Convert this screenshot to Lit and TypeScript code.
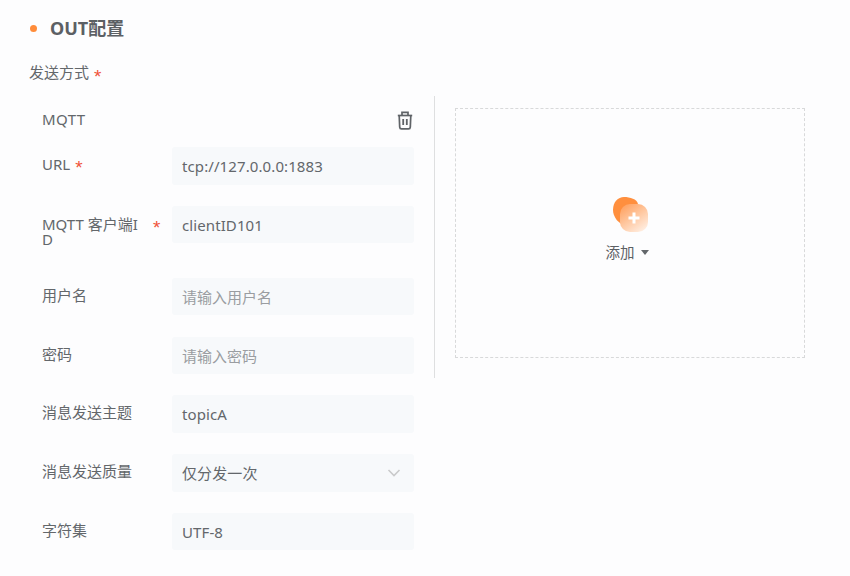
import { LitElement, html, css } from "lit";
import { customElement } from "lit/decorators.js";

type Row = { label: string; required?: boolean; value?: string; placeholder?: string; select?: boolean; tall?: boolean };

const ROWS: Row[] = [
  { label: "URL", required: true, value: "tcp://127.0.0.0:1883" },
  { label: "MQTT 客户端ID", required: true, value: "clientID101", tall: true },
  { label: "用户名", placeholder: "请输入用户名" },
  { label: "密码", placeholder: "请输入密码" },
  { label: "消息发送主题", value: "topicA" },
  { label: "消息发送质量", value: "仅分发一次", select: true },
  { label: "字符集", value: "UTF-8" },
];

@customElement("app-root")
export class AppRoot extends LitElement {
  static styles = css`
    :host {
      display: block;
      width: 850px;
      height: 576px;
      overflow: hidden;
      background: #fdfdfe;
      color: #63676b;
      font-family: "Noto Sans", "Noto Sans CJK SC", sans-serif;
      font-size: 15px;
    }
    .page { padding: 14px 0 0 30px; }
    .title { display: flex; align-items: center; height: 28px; gap: 13px; }
    .dot { width: 7px; height: 7px; border-radius: 50%; background: #ff8c3a; }
    .title-text { font-size: 18px; font-weight: 700; color: #5c6064; line-height: 27px; }
    .method { margin-top: 11px; height: 38px; line-height: 38px; margin-left: -1px; }
    .method, .label { white-space: nowrap; }
    .star { color: #f0533a; margin-left: 3px; font-family: "Liberation Mono", monospace; font-size: 19px; line-height: 1; font-weight: 400; position: relative; top: 5px; }
    .label .star { top: 6px; }
    .body { display: flex; margin-top: 5px; height: 282px; }
    .left { width: 405px; padding: 0 20px 0 12px; box-sizing: border-box; border-right: 1px solid #dedfe0; }
    .head { display: flex; justify-content: space-between; align-items: flex-start; height: 51px; padding-top: 12px; box-sizing: border-box; line-height: 22px; letter-spacing: 0.4px; }
    .head svg { display: block; margin-top: 3px; margin-right: 1px; }
    .row { display: flex; margin-bottom: 21.25px; }
    .label { width: 130px; flex: none; display: flex; padding-top: 7px; line-height: 20px; position: relative; }
    .label.tall { white-space: normal; line-height: 15px; padding-top: 11px; word-break: break-all; padding-right: 30px; box-sizing: border-box; }
    .label.tall .star { position: absolute; left: 109px; top: 14px; margin: 0; }
    .control {
      flex: 1;
      height: 37.5px;
      border-radius: 3px;
      background: #f7f9fb;
      display: flex;
      align-items: center;
      justify-content: space-between;
      padding: 0 13px 0 10px;
      box-sizing: border-box;
      font-size: 15px;
      letter-spacing: 0.1px;
      color: #63676b;
    }
    .tall-row { height: 50.75px; }
    .control.empty { color: #9a9da1; letter-spacing: 0; }
    .right { margin: 12px 0 0 20px; width: 350px; height: 250px; box-sizing: border-box; border: 1px dashed #d8d9da; display: flex; flex-direction: column; align-items: center; }
    .add-icon { margin-top: 88px; display: block; }
    .add-label { display: flex; align-items: center; gap: 6px; margin-top: 8px; margin-right: 6px; line-height: 22px; font-size: 14.5px; color: #5c6064; }
    .caret { width: 0; height: 0; border: 4px solid transparent; border-top: 5px solid #63676b; border-bottom: 0; }
  `;

  private row(r: Row) {
    return html`<div class="row ${r.tall ? "tall-row" : ""}">
      <div class="label ${r.tall ? "tall" : ""}">
        <span>${r.label}</span>${r.required ? html`<span class="star">*</span>` : ""}
      </div>
      <div class="control ${r.placeholder ? "empty" : ""}">
        <span>${r.value ?? r.placeholder}</span>
        ${r.select
          ? html`<svg width="14" height="8" viewBox="0 0 14 8" fill="none" stroke="#c9cacb" stroke-width="1.6"><path d="M1.5 1l5.5 5.5L12.5 1" /></svg>`
          : ""}
      </div>
    </div>`;
  }

  render() {
    return html`<div class="page">
      <div class="title"><span class="dot"></span><span class="title-text">OUT配置</span></div>
      <div class="method">发送方式<span class="star">*</span></div>
      <div class="body">
        <div class="left">
          <div class="head">
            <span>MQTT</span>
            <svg width="16" height="19" viewBox="0 0 16 19" fill="none" stroke="#5f6367" stroke-width="1.7">
              <path d="M.8 4.5h14.4" />
              <path d="M5 4V1.4h6V4" />
              <path d="M2.2 4.5l.5 11.6a1.8 1.8 0 0 0 1.8 1.7h7a1.8 1.8 0 0 0 1.8-1.7l.5-11.6" />
              <path d="M6.2 8v6M9.8 8v6" stroke-width="1.8" />
            </svg>
          </div>
          ${ROWS.map((r) => this.row(r))}
        </div>
        <div class="right">
          <svg class="add-icon" width="36" height="36" viewBox="0 0 36 36">
            <defs>
              <linearGradient id="g" x1="0.15" y1="0" x2="0.85" y2="1">
                <stop offset="0" stop-color="#ffa15f" />
                <stop offset="1" stop-color="#fff0e5" />
              </linearGradient>
            </defs>
            <path d="M1 13C1 5 6 0 12 0c6 0 13 2 14 7 1 6-4 21-12 21C7 28 1 20 1 13z" fill="#ff8f3e" />
            <rect x="8" y="7" width="28" height="28" rx="10" fill="url(#g)" />
            <path d="M22 15.5v11M16.5 21h11" stroke="#fff" stroke-width="3" />
          </svg>
          <div class="add-label"><span>添加</span><span class="caret"></span></div>
        </div>
      </div>
    </div>`;
  }
}
